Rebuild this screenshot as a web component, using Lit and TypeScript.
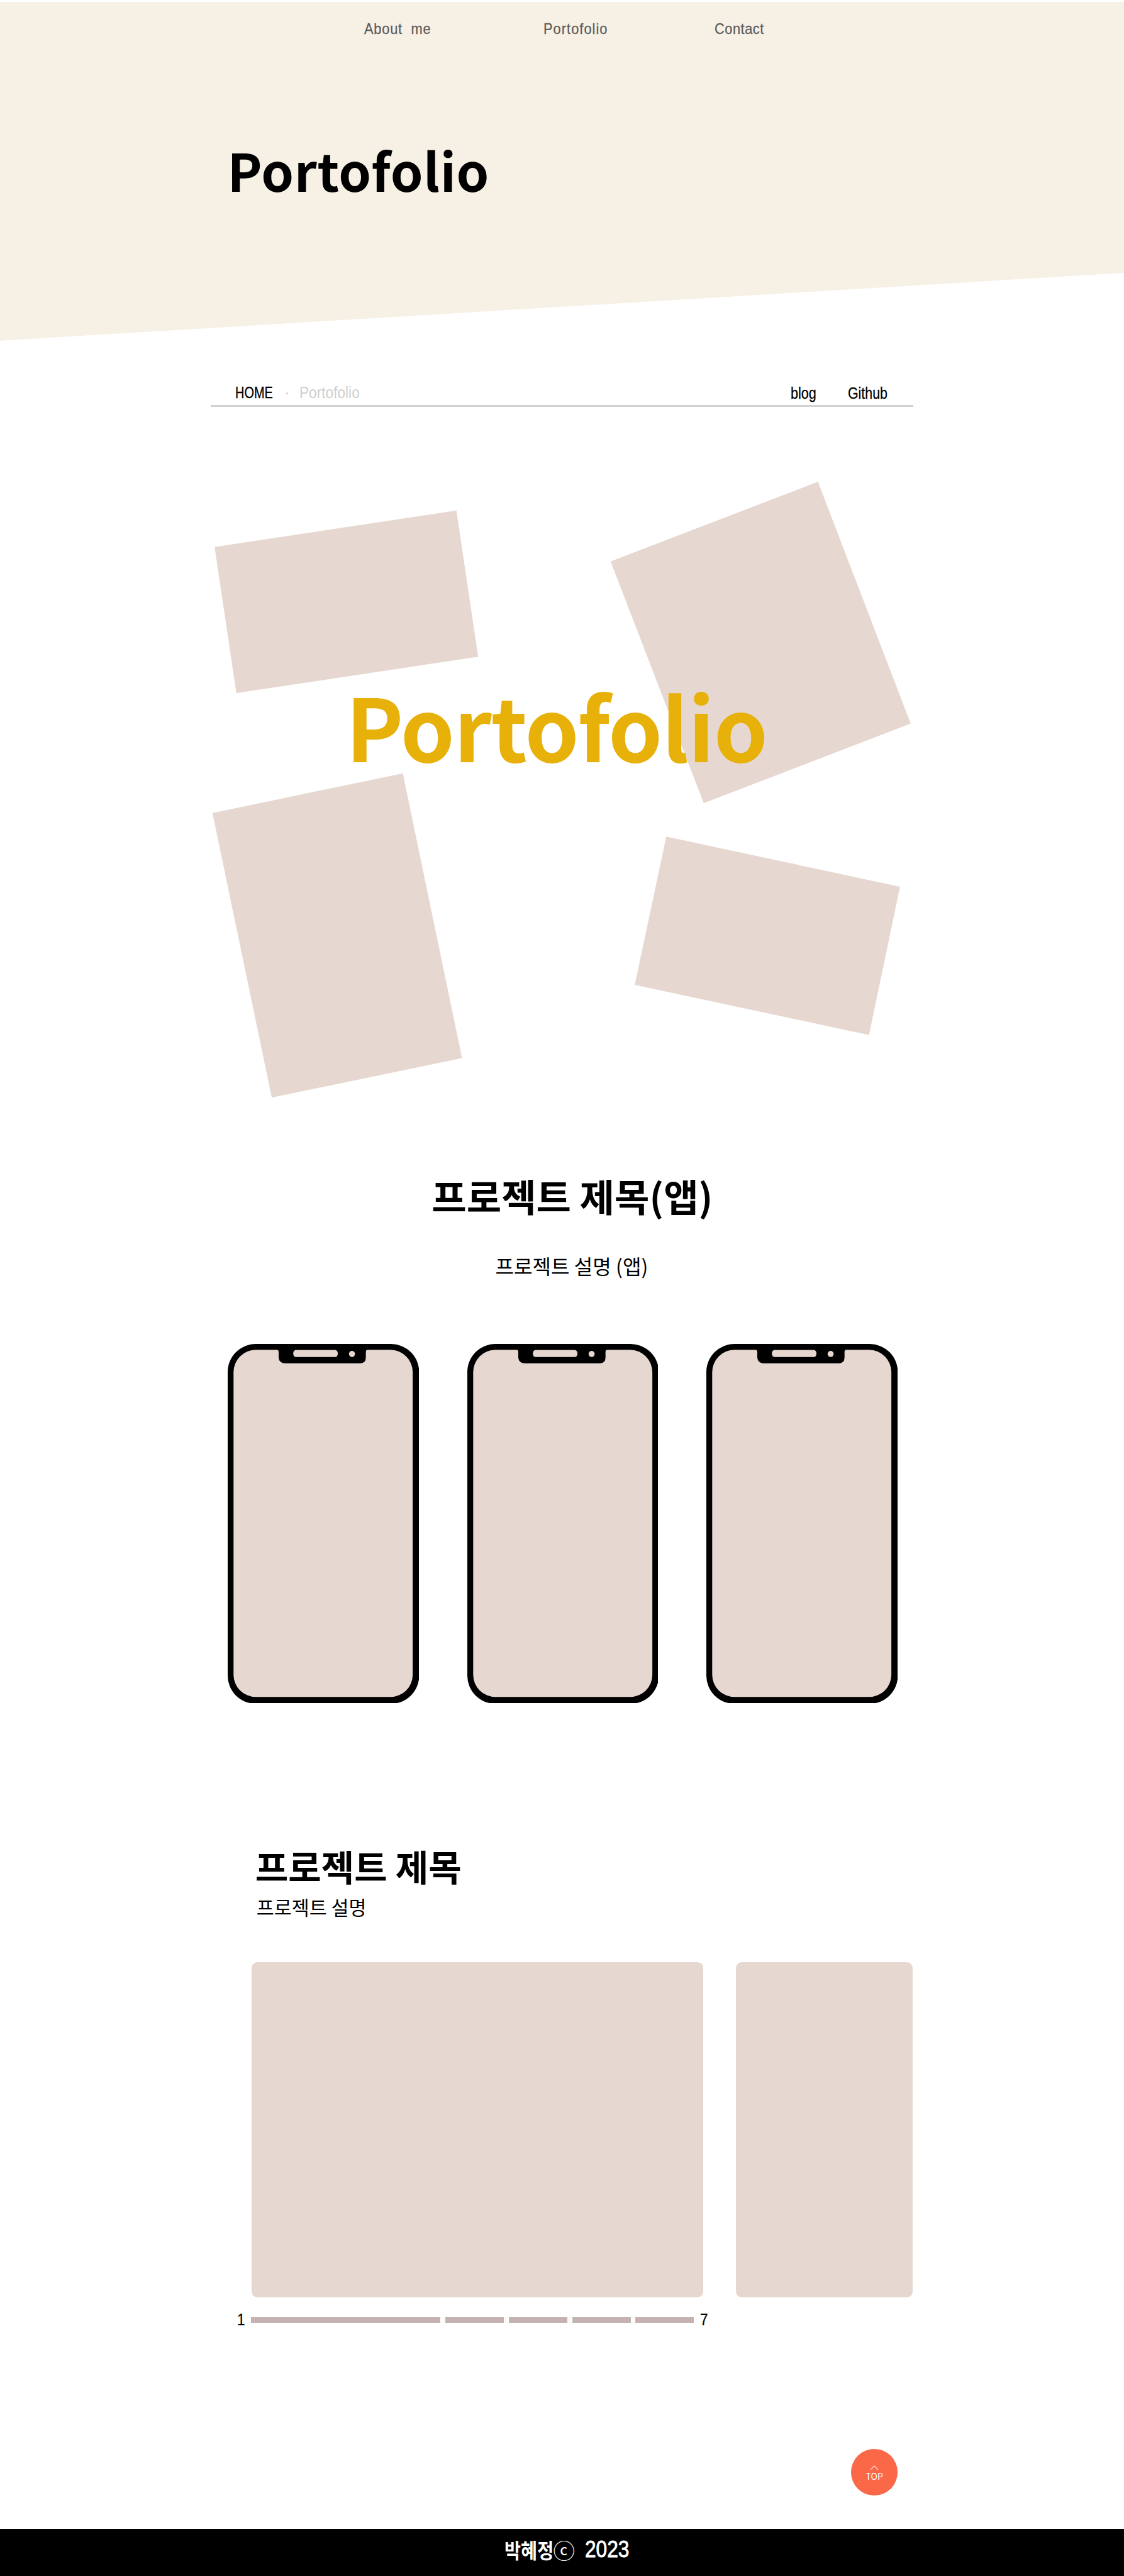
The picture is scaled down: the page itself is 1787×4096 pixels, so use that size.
import { LitElement, html, css, svg } from "lit";
import { customElement } from "lit/decorators.js";

const TILES = [
  "366.5,239.3 779.6,177.1 816.7,426.8 403.7,488.9",
  "1042.9,263.9 1397.1,127.9 1555.5,541 1202,676.9",
  "362.9,693.8 688,626 789.2,1112.5 464.2,1179.8",
  "1138,734 1537.3,819.7 1484.3,1073 1084.2,987.3",
];

const STEPS = [324, 100, 100, 100, 100];

@customElement("phone-frame")
export class PhoneFrame extends LitElement {
  static styles = css`
    :host { display: block; width: 326px; height: 613px; }
    .frame { display: block; width: 326px; height: 613px; }
    .body { fill: #000; }
    .screen { fill: #e6d8d0; }
  `;
  render() {
    return html`<svg class="frame" viewBox="0 0 326 613">
      <rect class="body" x="0" y="0" width="327" height="614.6" rx="48"></rect>
      <path class="screen" d="M48 10H84Q87 10 87 14V23Q88 33 98 33H226Q236 33 236 23V14Q236 10 239 10H278A38 38 0 0 1 316 48V565A38 38 0 0 1 278 603H48A38 38 0 0 1 10 565V48A38 38 0 0 1 48 10Z"></path>
      <rect class="screen" x="112" y="10.3" width="76" height="12" rx="5"></rect>
      <circle class="screen" cx="212.3" cy="17" r="5.2"></circle>
    </svg>`;
  }
}

@customElement("app-root")
export class AppRoot extends LitElement {
  static styles = css`
    :host {
      display: block;
      height: 4096px;
      overflow: hidden;
      background: #fff;
      color: #000;
      font-family: "Noto Sans CJK KR", "Noto Sans", sans-serif;
    }
    * { box-sizing: border-box; }
    h1, h2, h3, p { margin: 0; }
    .page {
      zoom: 0.9308;
      width: 1920px;
      height: 4401px;
      display: flex;
      flex-direction: column;
      white-space: nowrap;
    }
    .sans { font-family: "Liberation Sans", Arial, sans-serif; }
    .hero {
      margin-top: 3px;
      height: 579px;
      flex: none;
      background: #f7f0e5;
      clip-path: polygon(0 0, 100% 0, 100% 80%, 0 100%);
    }
    .nav {
      display: grid;
      grid-template-columns: 306px 292px auto;
      padding: 32px 0 0 622px;
      font-size: 25.5px;
      line-height: 30px;
      color: #5c5c5c;
      white-space: pre;
      -webkit-text-stroke: 0.3px #5c5c5c;
    }
    .narrow { display: inline-block; transform-origin: 0 50%; }
    .about { transform: scaleX(0.92); letter-spacing: 0.9px; }
    .portfolio { transform: scaleX(0.92); letter-spacing: 1.2px; }
    .contact { transform: scaleX(0.92); letter-spacing: 0.6px; }
    .hero-title {
      padding: 164.5px 0 0 388.5px;
      font-size: 89px;
      line-height: 120px;
      font-weight: 700;
      letter-spacing: 0.6px;
    }
    .crumbs {
      flex: none;
      width: 1200px;
      height: 113px;
      margin-left: 360px;
      padding: 0 0 5.5px 41.5px;
      border-bottom: 3.3px solid #d1d1d1;
      display: grid;
      grid-template-columns: 84px 26px 839.5px 97px auto;
      align-items: end;
      font-size: 28px;
      line-height: 30px;
    }
    .home { transform: scaleX(0.765); -webkit-text-stroke: 0.3px #000; }
    .here { transform: scaleX(0.87); }
    .blog { transform: translateY(1px) scaleX(0.83); -webkit-text-stroke: 0.3px #000; }
    .github { transform: translateY(1px) scaleX(0.82); -webkit-text-stroke: 0.3px #000; }
    .muted { color: #cfcfcf; }
    .collage { flex: none; height: 1205px; position: relative; }
    .tiles { display: block; width: 1920px; height: 1205px; fill: #e6d8d0; }
    .collage-title {
      position: absolute;
      left: 590.5px;
      top: 443px;
      font-size: 148px;
      line-height: 200px;
      font-weight: 700;
      letter-spacing: -1.4px;
      color: #e7b10a;
    }
    .app-head {
      flex: none;
      height: 396px;
      padding: 94px 0 0 35px;
      display: flex;
      flex-direction: column;
      align-items: center;
    }
    .app-title { font-size: 64.7px; line-height: 96px; font-weight: 700; }
    .app-text { margin: 47px 2px 0 0; font-size: 34.5px; line-height: 50px; }
    .phones { flex: none; display: flex; gap: 83px; padding-left: 389px; height: 846px; }
    .work-title { padding-left: 436px; font-size: 61.3px; line-height: 90px; font-weight: 700; }
    .work-text { padding-left: 438px; margin-top: 2px; font-size: 32.7px; line-height: 48px; }
    .cards { display: flex; gap: 56px; margin-top: 70px; padding-left: 430px; }
    .card { height: 572.5px; border-radius: 10px; background: #e6d8d0; }
    .wide { width: 771px; }
    .slim { width: 302px; }
    .pager {
      display: flex;
      align-items: center;
      gap: 8.3px;
      margin-top: 23.5px;
      padding-left: 405px;
      height: 30px;
      font-size: 28.5px;
      line-height: 30px;
    }
    .digit { transform: scaleX(0.85); width: 15px; -webkit-text-stroke: 0.3px #000; }
    .last { margin-left: 2px; }
    .step { height: 10.7px; background: #c6b2b2; }
    .top-row { padding: 206px 0 0 1454px; height: 342px; }
    .top {
      width: 79px;
      height: 79px;
      border-radius: 50%;
      background: #fa6848;
      color: #fff;
      display: flex;
      flex-direction: column;
      align-items: center;
      padding-top: 27.5px;
      font-size: 15px;
      line-height: 22px;
    }
    .chevron { width: 15px; height: 8px; fill: none; stroke: #fff; stroke-width: 1.2; }
    .footer {
      flex: 1;
      background: #000;
      color: #fff;
      display: flex;
      padding: 11px 0 0 862px;
      font-size: 35px;
      line-height: 50px;
      font-weight: 700;
    }
    .owner { transform: scaleX(0.87); width: 83px; }
    .mark { width: 54px; font-weight: 400; font-size: 37px; }
    .year {
      font-size: 39.5px;
      font-weight: 400;
      transform: scaleX(0.86);
      -webkit-text-stroke: 1px #fff;
    }
  `;

  render() {
    return html`<div class="page">
      <header class="hero">
        <nav class="nav sans"><span class="narrow about">About  me</span><span class="narrow portfolio">Portofolio</span><span class="narrow contact">Contact</span></nav>
        <h1 class="hero-title">Portofolio</h1>
      </header>
      <div class="crumbs sans">
        <span class="narrow home">HOME</span>
        <span class="muted">·</span>
        <span class="narrow here muted">Portofolio</span>
        <span class="narrow blog">blog</span>
        <span class="narrow github">Github</span>
      </div>
      <section class="collage">
        <svg class="tiles" viewBox="0 0 1920 1205">
          ${TILES.map((p) => svg`<polygon points=${p}></polygon>`)}
        </svg>
        <h2 class="collage-title">Portofolio</h2>
      </section>
      <section class="app-head">
        <h3 class="app-title">프로젝트 제목(앱)</h3>
        <p class="app-text">프로젝트 설명 (앱)</p>
      </section>
      <section class="phones">
        <phone-frame></phone-frame><phone-frame></phone-frame><phone-frame></phone-frame>
      </section>
      <section>
        <h3 class="work-title">프로젝트 제목</h3>
        <p class="work-text">프로젝트 설명</p>
        <div class="cards"><div class="card wide"></div><div class="card slim"></div></div>
        <div class="pager sans">
          <span class="narrow digit">1</span>
          ${STEPS.map((w) => html`<span class="step" style="width:${w}px"></span>`)}
          <span class="narrow digit last">7</span>
        </div>
      </section>
      <div class="top-row">
        <div class="top">
          <svg class="chevron" viewBox="0 0 15 8"><path d="M1 7.3L7.5 1L14 7.3"></path></svg>
          <span>TOP</span>
        </div>
      </div>
      <footer class="footer">
        <span class="narrow owner">박혜정</span><span class="mark">ⓒ</span><span class="narrow year sans">2023</span>
      </footer>
    </div>`;
  }
}
